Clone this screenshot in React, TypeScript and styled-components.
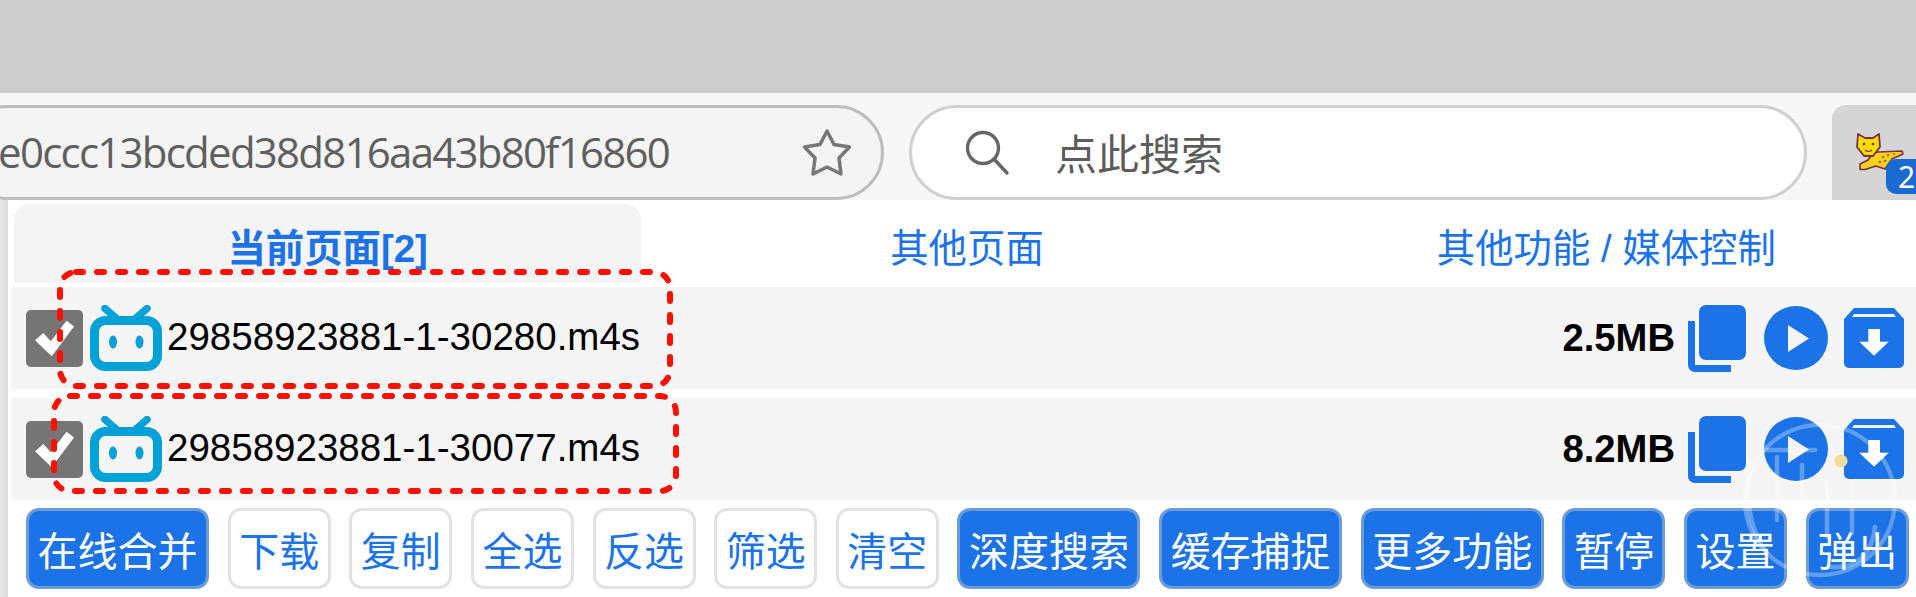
import React from 'react'
import styled, { createGlobalStyle } from 'styled-components'

const GlobalStyle = createGlobalStyle`
    html, body {
        margin: 0;
        padding: 0;
        background: #fff;
    }
    * {
        box-sizing: border-box;
    }
`

const BLUE = '#1c73e8'
const CJK = `"Liberation Sans", "Noto Sans CJK SC", sans-serif`

const Page = styled.div`
    position: relative;
    width: 1916px;
    height: 597px;
    overflow: hidden;
    font-family: ${CJK};
`

const TitleBar = styled.div`
    height: 93px;
    background: #cccccc;
`

const Toolbar = styled.div`
    height: 107px;
    padding-top: 12px;
    display: flex;
    gap: 25px;
    background: #f7f7f7;
    margin-left: -40px;
`

const UrlBox = styled.div`
    flex: 0 0 924px;
    display: flex;
    align-items: center;
    justify-content: flex-end;
    padding-right: 28px;
    overflow: hidden;
    background: #f4f4f4;
    border: 3px solid #bdbdbd;
    border-radius: 48px;
`

const UrlText = styled.span`
    margin-right: 132px;
    margin-top: -2px;
    font-family: "Open Sans", sans-serif;
    font-size: 42px;
    letter-spacing: -1.75px;
    color: #5f5f5f;
    white-space: nowrap;
`

const SearchBox = styled.div`
    flex: 0 0 898px;
    display: flex;
    align-items: center;
    gap: 44px;
    padding-left: 53px;
    background: #fff;
    border: 3px solid #d0d0d0;
    border-radius: 48px;
`

const SearchText = styled.span`
    margin-top: -3px;
    font-family: "Noto Sans CJK SC", sans-serif;
    font-size: 42px;
    color: #5c5c5c;
`

const ExtensionButton = styled.div`
    flex: 1;
    position: relative;
    padding: 28px 0 0 23px;
    background: #d5d5d5;
    border-radius: 14px 0 0 0;
`

const Badge = styled.span`
    position: absolute;
    left: 54px;
    top: 54px;
    width: 40px;
    height: 35px;
    padding-left: 12px;
    background: #1a6ad3;
    border-radius: 10px;
    color: #fff;
    font-family: "Noto Sans", sans-serif;
    font-size: 30px;
    line-height: 35px;
`

const Body = styled.div`
    display: flex;
    height: 397px;
`

const PageEdge = styled.div`
    flex: 0 0 8px;
    background: linear-gradient(to right, #e8e8e8, #dcdcdc);
`

const Popup = styled.div`
    flex: 1;
    min-width: 0;
    padding: 4px 0 0 3px;
    background: #fff;
`

const Tabs = styled.div`
    display: flex;
    gap: 12px;
    height: 79px;
    margin: 0 -4px 4px 3px;
`

const Tab = styled.div<{ $active?: boolean }>`
    flex: 1;
    display: flex;
    align-items: center;
    justify-content: center;
    padding-top: 3px;
    border-radius: 16px 16px 0 0;
    background: ${p => (p.$active ? '#f4f4f4' : 'transparent')};
    color: ${BLUE};
    font-size: 38.4px;
    font-weight: ${p => (p.$active ? 700 : 400)};
`

const Row = styled.div`
    display: flex;
    align-items: center;
    height: 102px;
    margin-bottom: 9px;
    padding: 0 12px 0 15px;
    background: #f5f5f5;
`

const CheckBox = styled.div`
    flex: 0 0 57px;
    height: 57px;
    display: flex;
    align-items: center;
    justify-content: center;
    background: #757575;
    border-radius: 5px;
`

const TypeIcon = styled.svg`
    flex: none;
    margin: 0 5px 0 7px;
`

const FileName = styled.span`
    flex: 1;
    margin-top: -2px;
    color: #000;
    font-size: 38.5px;
    white-space: nowrap;
`

const FileSize = styled.span`
    margin-right: 13px;
    color: #000;
    font-size: 38.2px;
    font-weight: 700;
`

const RowIcons = styled.div`
    display: flex;
    align-items: center;
    gap: 17px;

    svg:nth-child(2) {
        margin: 0 -1px 0 1px;
    }
`

const ActionBar = styled.div`
    display: flex;
    gap: 18.65px;
    margin-top: -1px;
    padding-left: 15px;
`

const ActionButton = styled.div<{ $primary?: boolean }>`
    flex: none;
    height: 81px;
    padding: 0 8.5px;
    display: flex;
    align-items: center;
    border-radius: 13px;
    border: 3.5px solid ${p => (p.$primary ? '#6c9bd8' : '#e2e2e2')};
    background: ${p => (p.$primary ? BLUE : '#fff')};
    color: ${p => (p.$primary ? '#fff' : BLUE)};
    font-size: 40px;
    white-space: nowrap;
`

const Annotation = styled.svg<{ $left: number; $top: number }>`
    position: absolute;
    left: ${p => p.$left}px;
    top: ${p => p.$top}px;
    pointer-events: none;
`

const Watermark = styled.svg`
    position: absolute;
    left: 1730px;
    top: 420px;
    pointer-events: none;
`

const StarIcon = () => (
    <svg width="52" height="50" viewBox="0 0 52 50" style={{ flex: 'none' }}>
        <path
            d="M26 3 L33 16.5 L48.5 19 L38 30 L40 46 L26 39 L12 46 L14 30 L3.5 19 L19 16.5 Z"
            fill="none"
            stroke="#777"
            strokeWidth="3.5"
            strokeLinejoin="round"
        />
    </svg>
)

const SearchIcon = () => (
    <svg width="46" height="46" viewBox="0 0 46 46" style={{ flex: 'none' }}>
        <circle cx="18" cy="18" r="15.5" fill="none" stroke="#666" strokeWidth="3.4" />
        <path d="M29 29 L42 43" stroke="#666" strokeWidth="3.4" strokeLinecap="round" />
    </svg>
)

const CatIcon = () => (
    <svg width="50" height="38" viewBox="0 0 50 38" style={{ display: 'block' }}>
        <path
            d="M18 20 L23 19 L47 18 L48 21 L37 26 L30 36 L21 33 L10 36.5 L5 36.5 L5 31 L13 27 Z"
            fill="#f7d21c"
            stroke="#7a3040"
            strokeWidth="1.6"
            strokeLinejoin="round"
        />
        <path
            d="M3 1 L10 5 L18 5 L24 1 L25 14 L18 23 L9 23 L2 14 Z"
            fill="#ffdc00"
            stroke="#7a3040"
            strokeWidth="1.8"
            strokeLinejoin="round"
        />
        <circle cx="9" cy="11" r="1.3" fill="#7a3040" />
        <circle cx="18" cy="11" r="1.3" fill="#7a3040" />
        <path d="M10 17 Q13.5 20 17 17" fill="none" stroke="#7a3040" strokeWidth="1.1" />
        <g fill="#b5651d">
            <circle cx="28" cy="24" r="1.3" />
            <circle cx="33" cy="22" r="1.2" />
            <circle cx="39" cy="21" r="1.1" />
            <circle cx="25" cy="29" r="1.3" />
            <circle cx="30" cy="28" r="1.3" />
        </g>
    </svg>
)

const CheckMark = () => (
    <svg width="39" height="37" viewBox="0 0 42 38">
        <path d="M0 21 L9 13 L17 22 L34 0 L42 6 L18 38 Z" fill="#fff" />
    </svg>
)

const BiliIcon = () => (
    <TypeIcon width="72" height="66" viewBox="0 0 72 66">
        <path d="M15 3.5 L26 13 M57 3.5 L46 13" stroke="#00a1d6" strokeWidth="7.5" strokeLinecap="round" />
        <rect x="4.5" y="15.5" width="63" height="46" rx="11" fill="none" stroke="#00a1d6" strokeWidth="9" />
        <ellipse cx="23" cy="37" rx="4" ry="6.5" fill="#00a1d6" />
        <ellipse cx="49.5" cy="37" rx="4" ry="6.5" fill="#00a1d6" />
    </TypeIcon>
)

const CopyIcon = () => (
    <svg width="58" height="67" viewBox="0 0 58 67">
        <rect x="11" y="0" width="47" height="55" rx="7" fill={BLUE} />
        <path d="M0 16 H7 V60 H43 V67 H7 A7 7 0 0 1 0 60 Z" fill={BLUE} />
    </svg>
)

const PlayIcon = () => (
    <svg width="64" height="64" viewBox="0 0 64 64">
        <circle cx="32" cy="32" r="32" fill={BLUE} />
        <path d="M24 19 L45 32.5 L24 46 Z" fill="#f4f4f4" />
    </svg>
)

const DownloadIcon = () => (
    <svg width="60" height="60" viewBox="0 0 60 60">
        <path d="M10 0 H50 L60 11 V55 A5 5 0 0 1 55 60 H5 A5 5 0 0 1 0 55 V11 Z" fill={BLUE} />
        <path d="M10 6 H50 L52 9 H8 Z" fill="#f4f4f4" />
        <path d="M24.3 21 H36 V33.7 H44.7 L30 47.7 L15.3 33.7 H24.3 Z" fill="#fff" />
    </svg>
)

const files = [
    { name: '29858923881-1-30280.m4s', size: '2.5MB' },
    { name: '29858923881-1-30077.m4s', size: '8.2MB' },
]

const actions = [
    { label: '在线合并', primary: true },
    { label: '下载' },
    { label: '复制' },
    { label: '全选' },
    { label: '反选' },
    { label: '筛选' },
    { label: '清空' },
    { label: '深度搜索', primary: true },
    { label: '缓存捕捉', primary: true },
    { label: '更多功能', primary: true },
    { label: '暂停', primary: true },
    { label: '设置', primary: true },
    { label: '弹出', primary: true },
]

const DashedBox = ({ left, top, width, height }: { left: number; top: number; width: number; height: number }) => (
    <Annotation $left={left} $top={top} width={width} height={height}>
        <rect
            x="3"
            y="3"
            width={width - 6}
            height={height - 6}
            rx="16"
            fill="none"
            stroke="#ff0f00"
            strokeWidth="6"
            strokeLinecap="round"
            strokeDasharray="7 14"
        />
    </Annotation>
)

const App = () => (
    <Page>
        <GlobalStyle />
        <TitleBar />
        <Toolbar>
            <UrlBox>
                <UrlText>e0ccc13bcded38d816aa43b80f16860</UrlText>
                <StarIcon />
            </UrlBox>
            <SearchBox>
                <SearchIcon />
                <SearchText>点此搜索</SearchText>
            </SearchBox>
            <ExtensionButton>
                <CatIcon />
                <Badge>2</Badge>
            </ExtensionButton>
        </Toolbar>
        <Body>
            <PageEdge />
            <Popup>
                <Tabs>
                    <Tab $active>当前页面[2]</Tab>
                    <Tab>其他页面</Tab>
                    <Tab>其他功能 / 媒体控制</Tab>
                </Tabs>
                {files.map(f => (
                    <Row key={f.name}>
                        <CheckBox>
                            <CheckMark />
                        </CheckBox>
                        <BiliIcon />
                        <FileName>{f.name}</FileName>
                        <FileSize>{f.size}</FileSize>
                        <RowIcons>
                            <CopyIcon />
                            <PlayIcon />
                            <DownloadIcon />
                        </RowIcons>
                    </Row>
                ))}
                <ActionBar>
                    {actions.map(a => (
                        <ActionButton key={a.label} $primary={a.primary}>
                            {a.label}
                        </ActionButton>
                    ))}
                </ActionBar>
            </Popup>
        </Body>
        <DashedBox left={57} top={269} width={616} height={120} />
        <DashedBox left={51} top={393} width={628} height={101} />
        <Watermark width="186" height="177" viewBox="0 0 186 177">
            <g fill="none" stroke="#fff" strokeOpacity="0.3" strokeWidth="4.5" strokeLinecap="round">
                <circle cx="90" cy="80" r="75" />
                <path d="M35 30 H85" />
                <path d="M20 43 Q12 100 37 133" />
                <path d="M47 37 V100 M72 45 V93 M97 63 V117 M122 63 V113" />
                <path d="M145 107 Q140 150 100 147" />
            </g>
            <circle cx="111" cy="41" r="6.5" fill="#f3dc9a" />
        </Watermark>
    </Page>
)

export default App
